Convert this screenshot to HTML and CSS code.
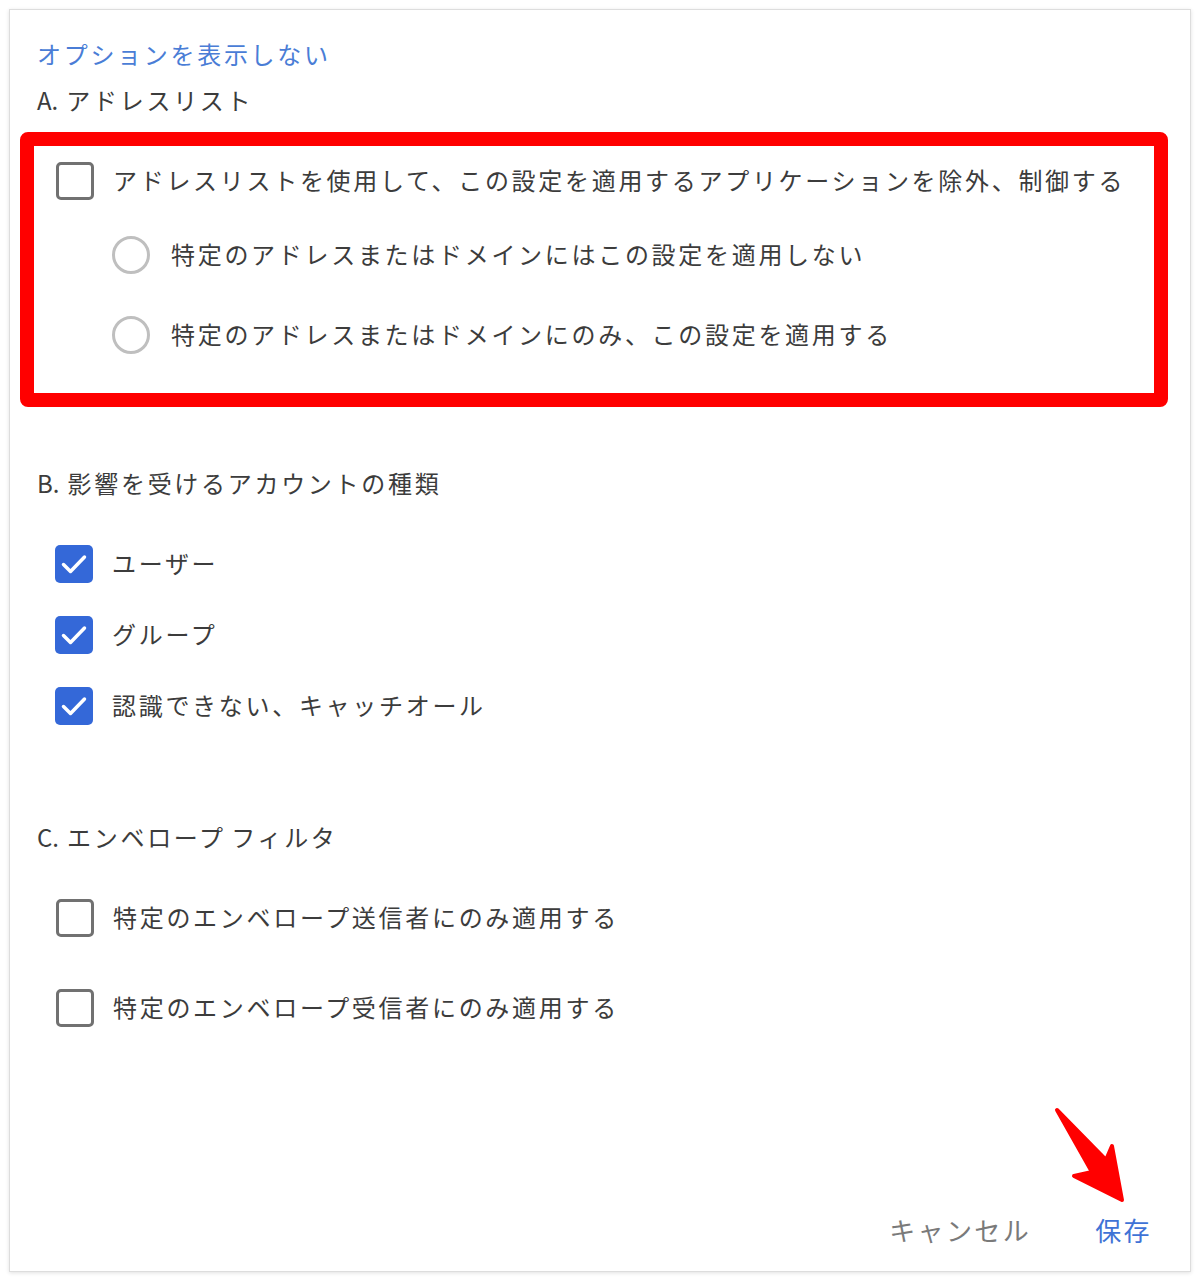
FILE: index.html
```html
<!DOCTYPE html>
<html lang="ja">
<head>
  <meta charset="UTF-8">
  <meta name="viewport" content="width=device-width, initial-scale=1.0">
  <title>アプリケーションの設定</title>
  <link rel="stylesheet" href="styles.css">
</head>
<body>
  <div class="card">
    <a class="toggle-link" href="#">オプションを表示しない</a>
    <div class="section-title title-a"><span class="prefix">A.</span> アドレスリスト</div>

    <!-- アドレスリスト（赤枠で強調） -->
    <div class="addr-box">
      <label class="option">
        <span class="checkbox"></span>
        <span class="option-text">アドレスリストを使用して、この設定を適用するアプリケーションを除外、制御する</span>
      </label>
      <div class="radio-group">
        <label class="option">
          <span class="radio"></span>
          <span class="option-text">特定のアドレスまたはドメインにはこの設定を適用しない</span>
        </label>
        <label class="option">
          <span class="radio"></span>
          <span class="option-text">特定のアドレスまたはドメインにのみ、この設定を適用する</span>
        </label>
      </div>
    </div>

    <div class="section-title title-b"><span class="prefix">B.</span> 影響を受けるアカウントの種類</div>
    <div class="option-list account-list">
      <label class="option">
        <span class="checkbox checked"><svg viewBox="0 0 38 38"><path d="M8.5 19.5 L15.5 26.5 L29.5 12"/></svg></span>
        <span class="option-text">ユーザー</span>
      </label>
      <label class="option">
        <span class="checkbox checked"><svg viewBox="0 0 38 38"><path d="M8.5 19.5 L15.5 26.5 L29.5 12"/></svg></span>
        <span class="option-text">グループ</span>
      </label>
      <label class="option">
        <span class="checkbox checked"><svg viewBox="0 0 38 38"><path d="M8.5 19.5 L15.5 26.5 L29.5 12"/></svg></span>
        <span class="option-text">認識できない、キャッチオール</span>
      </label>
    </div>

    <div class="section-title title-c"><span class="prefix">C.</span> エンベロープ<span class="prefix"> </span>フィルタ</div>
    <div class="option-list envelope-list">
      <label class="option">
        <span class="checkbox"></span>
        <span class="option-text">特定のエンベロープ送信者にのみ適用する</span>
      </label>
      <label class="option">
        <span class="checkbox"></span>
        <span class="option-text">特定のエンベロープ受信者にのみ適用する</span>
      </label>
    </div>

    <div class="actions">
      <button class="btn btn-cancel">キャンセル</button>
      <button class="btn btn-save">保存</button>
    </div>

    <!-- 保存ボタンを指す矢印 -->
    <svg class="arrow" viewBox="0 0 100 110">
      <polygon points="17,10 66,60 72,46 82,100 34,76 52,72"/>
    </svg>
  </div>
</body>
</html>
```

FILE: styles.css
```css
/* ページ全体 */
body {
  margin: 0;
  background-color: #ffffff;
  font-family: "Noto Sans CJK JP", "Noto Sans", sans-serif;
  color: #3c3c3c;
}

.card {
  position: relative;
  box-sizing: border-box;
  display: flex;
  flex-direction: column;
  align-items: flex-start;
  width: 1182px;
  height: 1263px;
  margin: 9px;
  padding: 27px 38px 24px 27px;
  border: 1px solid #dddddd;
  box-shadow: 0 1px 4px rgba(0, 0, 0, 0.12);
  background-color: #ffffff;
}

.toggle-link {
  font-size: 24px;
  line-height: 34px;
  letter-spacing: 2.7px;
  color: #4a7dd6;
  text-decoration: none;
}

.section-title {
  font-size: 24px;
  line-height: 34px;
  letter-spacing: 2.7px;
  color: #3c3c3c;
}

.section-title .prefix {
  letter-spacing: 0;
}

.title-a {
  margin-top: 12px;
}

.title-b {
  margin-top: 59px;
}

.title-c {
  margin-top: 95px;
}

/* 赤枠 */
.addr-box {
  align-self: stretch;
  margin: 15px -16px 0 -17px;
  padding: 16px 0 39px 22px;
  border: 14px solid #ff0000;
  border-radius: 8px;
}

.radio-group {
  display: flex;
  flex-direction: column;
  gap: 42px;
  margin-top: 36px;
  padding-left: 56px;
}

.option {
  display: flex;
  align-items: center;
  height: 38px;
  font-size: 24px;
  letter-spacing: 2.7px;
  color: #3c3c3c;
}

.option-text {
  margin-top: -3px;
  white-space: nowrap;
}

.checkbox {
  box-sizing: border-box;
  flex: none;
  width: 38px;
  height: 38px;
  margin-right: 19px;
  border: 3px solid #717171;
  border-radius: 5px;
}

.checkbox.checked {
  border: none;
  background-color: #3468d8;
}

.checkbox svg {
  display: block;
  width: 38px;
  height: 38px;
}

.checkbox svg path {
  fill: none;
  stroke: #ffffff;
  stroke-width: 3.5;
  stroke-linecap: round;
  stroke-linejoin: round;
}

.radio {
  box-sizing: border-box;
  flex: none;
  width: 38px;
  height: 38px;
  margin-right: 21px;
  border: 3px solid #bfbfbf;
  border-radius: 50%;
}

.option-list {
  display: flex;
  flex-direction: column;
}

.account-list {
  gap: 33px;
  margin-top: 45px;
  padding-left: 18px;
}

.envelope-list {
  gap: 52px;
  margin-top: 45px;
  padding-left: 19px;
}

/* 下部ボタン */
.actions {
  align-self: stretch;
  display: flex;
  justify-content: flex-end;
  gap: 64px;
  margin-top: auto;
}

.btn {
  padding: 0;
  border: none;
  background: none;
  font-family: inherit;
  font-size: 26px;
  line-height: 34px;
  letter-spacing: 2.4px;
  cursor: pointer;
}

.btn-cancel {
  color: #7a7a7a;
}

.btn-save {
  color: #3f73d6;
}

.arrow {
  position: absolute;
  left: 1030px;
  top: 1090px;
  width: 100px;
  height: 110px;
  overflow: visible;
}

.arrow polygon {
  fill: #ff0000;
  stroke: #ff0000;
  stroke-width: 4;
  stroke-linejoin: round;
}
```
